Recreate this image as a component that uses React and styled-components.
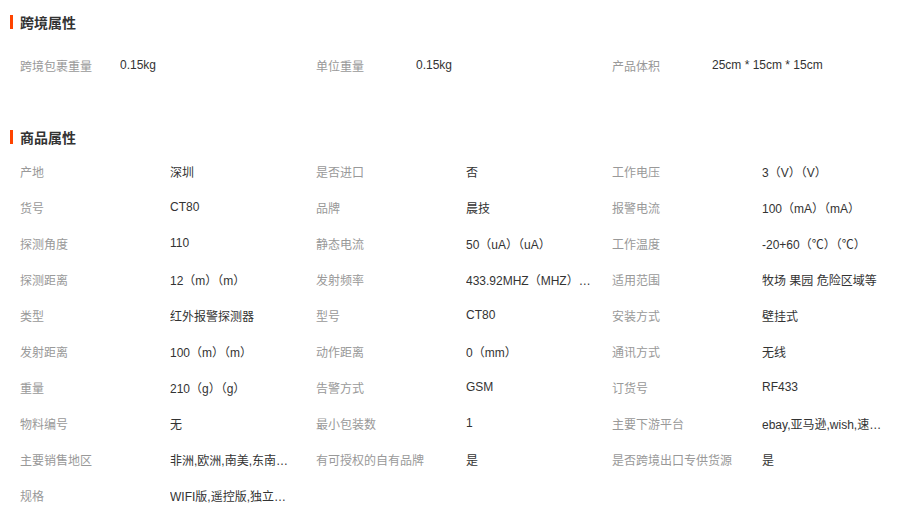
import React from "react";
import styled, { createGlobalStyle } from "styled-components";

const Global = createGlobalStyle`
  html, body { margin: 0; padding: 0; background: #fff; }
  body { font-family: "Liberation Sans", "Noto Sans CJK SC", sans-serif; font-size: 12px; color: #333; }
`;

const Page = styled.div`
  width: 920px;
  padding: 8px 0 0 10px;
  box-sizing: border-box;
`;

const Title = styled.h3`
  display: flex;
  align-items: center;
  gap: 7px;
  height: 28px;
  margin: ${(p) => p.$mt || 0}px 0 0 0;
  font-size: 14px;
  font-weight: bold;
  color: #333;
  &::before {
    content: "";
    display: block;
    width: 3px;
    height: 14px;
    background: #ff4400;
  }
`;

const Grid = styled.div`
  display: grid;
  grid-template-columns: repeat(3, 296px);
  padding-left: 10px;
  margin-top: ${(p) => p.$mt || 0}px;
`;

const Item = styled.div`
  display: grid;
  grid-template-columns: ${(p) => p.$lw}px 1fr;
  height: 36px;
  align-items: center;
`;

const Label = styled.span`
  color: #999;
  white-space: nowrap;
`;

const Value = styled.span`
  color: #333;
  white-space: nowrap;
  overflow: hidden;
  text-overflow: ellipsis;
  max-width: 126px;
`;

const cross = [
  ["跨境包裹重量", "0.15kg"],
  ["单位重量", "0.15kg"],
  ["产品体积", "25cm * 15cm * 15cm"],
];

const attrs = [
  ["产地", "深圳"],
  ["是否进口", "否"],
  ["工作电压", "3（V）（V）"],
  ["货号", "CT80"],
  ["品牌", "晨技"],
  ["报警电流", "100（mA）（mA）"],
  ["探测角度", "110"],
  ["静态电流", "50（uA）（uA）"],
  ["工作温度", "-20+60（℃）（℃）"],
  ["探测距离", "12（m）（m）"],
  ["发射频率", "433.92MHZ（MHZ）（MHZ）"],
  ["适用范围", "牧场 果园 危险区域等"],
  ["类型", "红外报警探测器"],
  ["型号", "CT80"],
  ["安装方式", "壁挂式"],
  ["发射距离", "100（m）（m）"],
  ["动作距离", "0（mm）"],
  ["通讯方式", "无线"],
  ["重量", "210（g）（g）"],
  ["告警方式", "GSM"],
  ["订货号", "RF433"],
  ["物料编号", "无"],
  ["最小包装数", "1"],
  ["主要下游平台", "ebay,亚马逊,wish,速卖通,独立站,LAZADA"],
  ["主要销售地区", "非洲,欧洲,南美,东南亚,北美,东北亚,中东"],
  ["有可授权的自有品牌", "是"],
  ["是否跨境出口专供货源", "是"],
  ["规格", "WIFI版,遥控版,独立版,套装版"],
];

export default function App() {
  return (
    <Page>
      <Global />
      <Title>跨境属性</Title>
      <Grid $mt={11}>
        {cross.map(([l, v]) => (
          <Item key={l} $lw={100}>
            <Label>{l}</Label>
            <Value>{v}</Value>
          </Item>
        ))}
      </Grid>
      <Title $mt={40}>商品属性</Title>
      <Grid $mt={2}>
        {attrs.map(([l, v]) => (
          <Item key={l} $lw={150}>
            <Label>{l}</Label>
            <Value>{v}</Value>
          </Item>
        ))}
      </Grid>
    </Page>
  );
}
